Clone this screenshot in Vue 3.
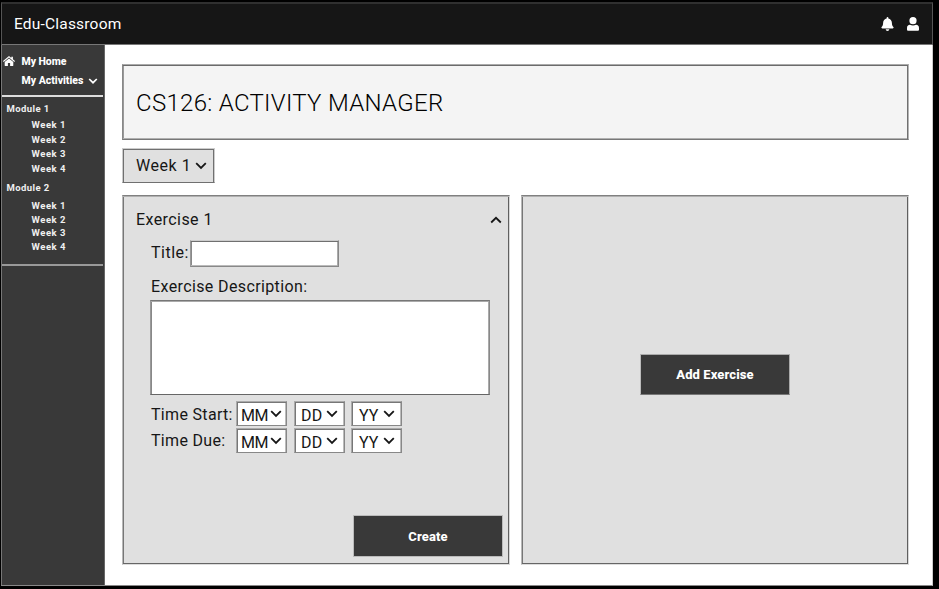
<script setup>
const modules = [
  { name: 'Module 1', key: 'm1', weeks: ['Week 1', 'Week 2', 'Week 3', 'Week 4'] },
  { name: 'Module 2', key: 'm2', weeks: ['Week 1', 'Week 2', 'Week 3', 'Week 4'] },
]
const dates = [
  { label: 'Time Start:', key: 'start' },
  { label: 'Time Due:', key: 'due' },
]
const parts = ['MM', 'DD', 'YY']
</script>

<template>
  <div class="window">
    <header class="topbar">
      <span class="brand">Edu-Classroom</span>
      <svg class="bell" viewBox="0 0 448 512"><path d="M224 512c35 0 64-29 64-64H160c0 35 29 64 64 64zm215-150c-19-20-55-51-55-154 0-77-54-139-128-154V32a32 32 0 0 0-64 0v22C118 69 64 131 64 208c0 103-36 134-55 154-6 6-9 14-9 22 0 16 13 32 32 32h384c19 0 32-16 32-32 0-8-3-16-9-22z" /></svg>
      <svg class="user" viewBox="0 0 12 14"><circle cx="6" cy="3.7" r="3.6" /><path d="M3 7.8c1.8 1 4.2 1 6 0 1.9 0 3 1.3 3 3.1v1.500c0 .9-.5 1.400-1.400 1.400H1.400C.5 13.800 0 13.300 0 12.400v-1.500C0 9.100 1.100 7.800 3 7.800z" /></svg>
    </header>
    <div class="body">
      <nav class="sidebar">
        <div class="primary">
          <div class="link home">
            <svg class="house" viewBox="0 0 12 10"><path d="M6 .1 8.300 2V.7h1.600v2.600L12 5.100l-.7.8L6 1.600.7 5.900 0 5.100z" /><path d="M6 2.600l4.300 3.500v3.500c0 .3-.2.4-.4.4H7.100V6.900H4.900V10H2.100c-.3 0-.4-.2-.4-.4V6.100z" /></svg>
            <span class="home-text">My Home</span>
          </div>
          <div class="link acts">
            <span class="acts-text">My Activities</span>
            <svg class="chev-s" viewBox="0 0 10 6"><path d="M1.200 1 5 4.700 8.800 1" /></svg>
          </div>
        </div>
        <div class="modules">
          <section v-for="m in modules" :key="m.key" :class="m.key">
            <div class="module">{{ m.name }}</div>
            <ul>
              <li v-for="w in m.weeks" :key="w">{{ w }}</li>
            </ul>
          </section>
        </div>
      </nav>
      <main>
        <div class="banner box"><h1>CS126: ACTIVITY MANAGER</h1></div>
        <div class="week box">
          <span>Week 1</span>
          <svg class="chev" viewBox="0 0 12 8"><path d="M1.200 1.200 6 6l4.800-4.800" /></svg>
        </div>
        <div class="panels">
          <section class="panel box exercise">
            <div class="ex-head">
              <span class="ex-name">Exercise 1</span>
              <svg class="chev up" viewBox="0 0 12 8"><path d="M1.200 6.500 6 1.800l4.800 4.700" /></svg>
            </div>
            <div class="title-row">
              <span class="title-label">Title:</span>
              <div class="title-input box"></div>
            </div>
            <div class="desc-label">Exercise Description:</div>
            <div class="desc box"></div>
            <div v-for="d in dates" :key="d.key" class="date-row" :class="d.key">
              <span class="date-label">{{ d.label }}</span>
              <div v-for="p in parts" :key="p" class="pick box" :class="p.toLowerCase()">
                <span>{{ p }}</span>
                <svg class="chev" viewBox="0 0 12 8"><path d="M1.200 1.200 6 6l4.800-4.800" /></svg>
              </div>
            </div>
            <div class="btn create"><span>Create</span></div>
          </section>
          <section class="panel box adder">
            <div class="btn add"><span>Add Exercise</span></div>
          </section>
        </div>
      </main>
    </div>
  </div>
</template>

<style>
body { background: #000; }
</style>
<style scoped>
* { box-sizing: border-box; }
.window {
  width: 939px; height: 589px; padding: 2px 6px 3px 1px; background: #000;
  display: flex; flex-direction: column; overflow: hidden;
  font-family: Roboto, "Noto Sans", sans-serif; font-size: 16px; color: #161616;
}
span, h1, .module, li, .desc-label { white-space: nowrap; }
.topbar {
  height: 43px; flex: none; background: #161616; color: #fff; fill: #fff;
  border-top: 2px solid #303030; border-bottom: 1px solid #777;
  border-left: 1px solid #555; border-right: 1px solid #555;
  display: flex; align-items: center; padding: 0 13px 0 12px;
}
.brand { font-size: 15.500px; letter-spacing: .2px; flex: 1; }
.bell { width: 13px; height: 14px; margin-right: 13px; }
.user { width: 12px; height: 14px; }
.body { flex: 1; display: flex; background: #fff; border-bottom: 1px solid #888; border-right: 1px solid #ccc; min-height: 0; }
.sidebar {
  width: 104px; flex: none; background: #393939; color: #fff;
  border-left: 1px solid #777; border-right: 1px solid #666;
}
.primary { height: 52px; width: 101px; border-bottom: 2px solid #ddd; padding-top: 6px; }
.link { display: flex; align-items: center; height: 20px; font-weight: 800; font-size: 10.500px; }
.home-text { letter-spacing: -.05px; }
.house { width: 12px; height: 10px; margin: 0 6.500px 0 1px; fill: #fff; }
.acts { padding-left: 19.500px; height: 19px; }
.chev-s { width: 10px; height: 6px; margin: 1px 0 0 4.500px; fill: none; stroke: #fff; stroke-width: 1.700; }
.modules { height: 169px; width: 101px; border-bottom: 2px solid #999; padding: 4px 0 0 4.500px; font-size: 9.500px; font-weight: 700; color: #f0f0f0; }
.module { height: 15px; line-height: 15px; letter-spacing: .42px; }
ul { list-style: none; margin: 0; padding: 2px 0 0 25px; }
li { height: 14.700px; line-height: 14px; letter-spacing: .55px; }
.m2 { margin-top: 3px; }
.m2 ul { padding-top: 4px; }
.m2 li { height: 13.800px; }
main { flex: 1; padding: 19px 23px 0 17px; display: flex; flex-direction: column; align-items: flex-start; }
.box { border: 1px solid #b8b8b8; box-shadow: inset 0 0 0 1px #747474; }
.banner {
  width: 787px; height: 76px; background: #f4f4f4; padding: 2px 0 0 13px; display: flex; align-items: center;
  border-color: #aaa #b4b4b4 #777 #888;
  box-shadow: inset 0 1px #6b6b6b, inset -1px 0 #707070, inset 0 -1px #b0b0b0, inset 1px 0 #999;
}
h1 { margin: 0; font-size: 24px; font-weight: 300; color: #000; letter-spacing: .3px; }
.week {
  margin-top: 8px; width: 93px; height: 35px; background: #e0e0e0; display: flex; align-items: center; padding: 0 0 0 13px;
  border-color: #ccc #ccc #707070 #ccc;
  box-shadow: inset 0 1px #707070, inset -1px 0 #707070, inset 1px 0 #707070;
}
.week span { width: 58.500px; letter-spacing: .55px; }
.chev { width: 12px; height: 8px; flex: none; fill: none; stroke: #161616; stroke-width: 1.800; }
.panels { margin-top: 12px; display: flex; gap: 11px; }
.panel {
  width: 388px; height: 370px; background: #e0e0e0;
  border-color: #808080 #d8d8d8 #ddd #b8b8b8;
  box-shadow: inset 0 1px #b0b0b0, inset -1px 0 #606060, inset 0 -1px #666, inset 1px 0 #777;
}
.exercise { padding: 11px 6px 0 13px; }
.ex-head { display: flex; align-items: center; justify-content: space-between; height: 26px; padding-right: 1.500px; }
.ex-name { margin-bottom: 2px; letter-spacing: .42px; }
.title-row { display: flex; align-items: center; margin: 7px 0 0 15px; height: 27px; }
.title-label { width: 39px; margin-bottom: 2px; letter-spacing: .5px; }
.title-input {
  width: 149px; height: 27px; background: #fff; border-color: #ccc #888 #888 #999;
  box-shadow: inset 0 1px #707070, inset -1px 0 #aaa, inset 0 -1px #bbb, inset 1px 0 #888;
}
.desc-label { margin: 8px 0 0 15px; height: 25px; line-height: 24px; letter-spacing: .38px; }
.desc {
  margin-left: 14px; width: 340px; height: 95px; background: #fff; border-color: #777 #888 #666 #999;
  box-shadow: inset 0 1px #aaa, inset -1px 0 #aaa, inset 1px 0 #888;
}
.date-row { display: flex; margin-left: 15px; height: 25px; align-items: center; }
.start { margin-top: 6px; }
.due { margin-top: 2px; }
.date-label { width: 85px; letter-spacing: .32px; }
.start .date-label { margin-top: 2px; }
.pick {
  height: 25px; width: 51px; background: #fff; display: flex; align-items: center; justify-content: space-between; padding: 0 4px;
  border-color: #aaa #888 #888 #aaa; box-shadow: inset 0 1px #777, inset 1px 0 #777, inset -1px 0 #bbb;
}
.pick span { margin-top: 3px; }
.mm span { letter-spacing: -.5px; }
.dd { margin: 0 6px 0 7px; padding-left: 6px; padding-right: 6px; }
.dd span { letter-spacing: .2px; }
.yy { padding: 0 6px 0 7px; }
.btn { display: flex; align-items: center; justify-content: center; background: #393939; color: #fff; font-size: 13px; font-weight: 800; letter-spacing: .1px; width: 150px; height: 42px; border: 1px solid #bbb; }
.create { margin: 62px 0 0 auto; }
.adder { display: flex; align-items: center; justify-content: center; }
.add { height: 41px; margin-top: -11px; border-color: #aaa #aaa #777 #bbb; }
</style>
